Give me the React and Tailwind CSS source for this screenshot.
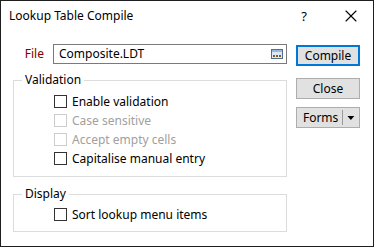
import { X } from "lucide-react";

const font = { fontFamily: '"Segoe UI", "Noto Sans", "Open Sans", sans-serif' };

function Check({ label, disabled }) {
  return (
    <div className="flex items-center h-[19px]">
      <div
        className={`w-[13px] h-[13px] border bg-white ${disabled ? "border-[#cccccc]" : "border-[#333333]"}`}
      />
      <span className={`ml-[5px] ${disabled ? "text-[#a0a0a0]" : "text-black"}`}>{label}</span>
    </div>
  );
}

function BrowseIcon() {
  return (
    <svg width="12" height="10" viewBox="0 0 12 10">
      <rect x="0.5" y="0.5" width="11" height="9" fill="#dbe8f5" stroke="#4f6f8f" />
      <rect x="1" y="1" width="10" height="2" fill="#9ab8d8" />
      <rect x="2" y="6" width="2" height="2" fill="#8a5a1a" />
      <rect x="5" y="6" width="2" height="2" fill="#8a5a1a" />
      <rect x="8" y="6" width="2" height="2" fill="#8a5a1a" />
    </svg>
  );
}

export default function App() {
  return (
    <div
      className="w-[374px] h-[247px] border border-[#1e1e1e] bg-white text-[12px] leading-[14px] text-black flex flex-col"
      style={font}
    >
      {/* title bar */}
      <div className="h-[32px] flex items-center pl-[8px] shrink-0">
        <span className="text-[12px] mt-[-2px]">Lookup Table Compile</span>
        <span className="ml-auto mr-[34px] text-[13px] mt-[-2px]">?</span>
        <X className="w-[20px] h-[20px] mr-[12px] mt-[-2px]" strokeWidth={1.3} />
      </div>

      <div className="flex pt-[11px]">
        {/* left column */}
        <div className="pl-[12px] w-[286px] flex flex-col">
          <div className="flex items-center h-[20px]">
            <span className="w-[31px] text-right text-[#800000]">File</span>
            <div className="ml-[9px] w-[234px] h-[20px] border border-[#7a7a7a] flex items-center pl-[5px] pr-[3px]">
              <span>Composite.LDT</span>
              <span className="ml-auto flex">
                <BrowseIcon />
              </span>
            </div>
          </div>

          <fieldset className="mt-[9px] border border-[#dcdcdc] h-[104px]">
            <legend className="ml-[8px] px-[3px]">Validation</legend>
            <div className="mt-[5px] pl-[40px] flex flex-col">
              <Check label="Enable validation" />
              <Check label="Case sensitive" disabled />
              <Check label="Accept empty cells" disabled />
              <Check label="Capitalise manual entry" />
            </div>
          </fieldset>

          <fieldset className="mt-[10px] border border-[#dcdcdc] h-[45px]">
            <legend className="ml-[8px] px-[3px]">Display</legend>
            <div className="mt-[4px] pl-[40px]">
              <Check label="Sort lookup menu items" />
            </div>
          </fieldset>
        </div>

        {/* right column */}
        <div className="ml-[9px] w-[64px] flex flex-col">
          <div className="mt-[1px] h-[21px] border-2 border-[#0078d7] bg-[#e1e1e1] flex items-center justify-center">
            Compile
          </div>
          <div className="mt-[12px] h-[21px] border border-[#adadad] bg-[#e1e1e1] flex items-center justify-center">
            Close
          </div>
          <div className="mt-[8px] h-[21px] border border-[#adadad] bg-[#e1e1e1] flex items-center">
            <span className="w-[46px] text-center pl-[2px]">Forms</span>
            <div className="w-px h-[15px] bg-[#9a9a9a]" />
            <svg width="16" height="8" viewBox="0 0 16 8">
              <path d="M4.5 2 L11.5 2 L8 6 Z" fill="#000" />
            </svg>
          </div>
        </div>
      </div>
    </div>
  );
}
